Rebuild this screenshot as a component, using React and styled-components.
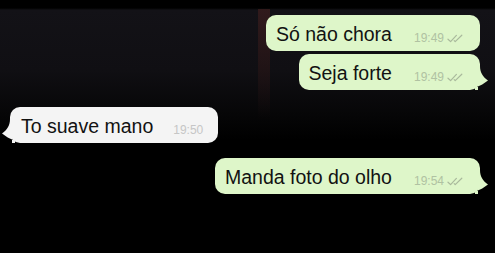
import React from 'react';
import styled, { createGlobalStyle } from 'styled-components';

const messages = [
  { id: 1, text: 'Só não chora', time: '19:49', mine: true, tail: false, gap: 0 },
  { id: 2, text: 'Seja forte', time: '19:49', mine: true, tail: true, gap: 3 },
  { id: 3, text: 'To suave mano', time: '19:50', mine: false, tail: true, gap: 17 },
  { id: 4, text: 'Manda foto do olho', time: '19:54', mine: true, tail: true, gap: 15 },
];

const App = () => {
  return (
    <>
      <GlobalStyle />
      <Screen>
        {messages.map((m) => (
          <Row key={m.id} $mine={m.mine} $gap={m.gap}>
            <Bubble $mine={m.mine}>
              <Text>{m.text}</Text>
              <Meta $mine={m.mine}>
                {m.time}
                {m.mine && <Ticks />}
              </Meta>
              {m.tail && <Tail $mine={m.mine} />}
            </Bubble>
          </Row>
        ))}
      </Screen>
    </>
  );
};

const Ticks = () => (
  <svg width="17" height="9" viewBox="0 0 17 9" fill="none">
    <path d="M1 5.2 L3.6 7.6 L9.4 1.4" stroke="#a9b99c" strokeWidth="1.2" strokeLinecap="round" strokeLinejoin="round" />
    <path d="M7.2 6.6 L8.2 7.6 L14.8 1.2" stroke="#a9b99c" strokeWidth="1.2" strokeLinecap="round" strokeLinejoin="round" />
  </svg>
);

// little pointed tail at the bottom corner of a bubble; x=2 is the bubble edge
const Tail = ({ $mine }) => (
  <TailSvg $mine={$mine} width="12" height="24" viewBox="0 0 12 24">
    <path
      d="M0 0 L2 0 C2 6 4.5 10.5 10 14.5 C6 17.5 3 19.5 -3 21.5 L-3 24 L0 24 Z"
      fill={$mine ? '#def6c9' : '#f4f4f4'}
    />
  </TailSvg>
);

const GlobalStyle = createGlobalStyle`
  html, body {
    margin: 0;
    padding: 0;
    background: #000;
  }
  body {
    font-family: "Liberation Sans", Arial, sans-serif;
  }
`;

const Screen = styled.div`
  width: 495px;
  height: 253px;
  overflow: hidden;
  display: flex;
  flex-direction: column;
  padding-top: 15px;
  box-sizing: border-box;
  background-color: #000;
  background-image:
    linear-gradient(to bottom, rgba(62, 30, 30, 0.7) 0px, rgba(50, 24, 24, 0.45) 60px, rgba(0, 0, 0, 0) 110px),
    linear-gradient(to bottom, #000 0px, #000 8px, #131217 10px, #100f13 70px, #060607 115px, #000 140px);
  background-size: 12px 253px, 100% 100%;
  background-position: 258px 9px, 0 0;
  background-repeat: no-repeat;
`;

const Row = styled.div`
  display: flex;
  justify-content: ${(p) => (p.$mine ? 'flex-end' : 'flex-start')};
  margin-top: ${(p) => p.$gap}px;
  padding: ${(p) => (p.$mine ? '0 15px 0 0' : '0 0 0 10px')};
`;

const Bubble = styled.div`
  position: relative;
  display: flex;
  align-items: center;
  height: 36px;
  box-sizing: border-box;
  padding: ${(p) => (p.$mine ? '0 16px 0 10px' : '0 15px 0 11px')};
  border-radius: 10px;
  background: ${(p) => (p.$mine ? '#def6c9' : '#f4f4f4')};
  color: #121212;
`;

const Text = styled.span`
  font-size: 19.5px;
  line-height: 22px;
  white-space: nowrap;
  padding-top: 1px;
`;

const Meta = styled.span`
  align-self: flex-end;
  display: flex;
  align-items: center;
  gap: 3px;
  margin: 0 0 7px ${(p) => (p.$mine ? 22 : 20)}px;
  font-size: 12px;
  line-height: 12px;
  color: ${(p) => (p.$mine ? '#b0c2a2' : '#c6c6c6')};
  white-space: nowrap;
`;

const TailSvg = styled.svg`
  position: absolute;
  bottom: 0;
  ${(p) => (p.$mine ? 'right: -10px;' : 'left: -10px; transform: scaleX(-1);')}
  overflow: visible;
`;

export default App;
